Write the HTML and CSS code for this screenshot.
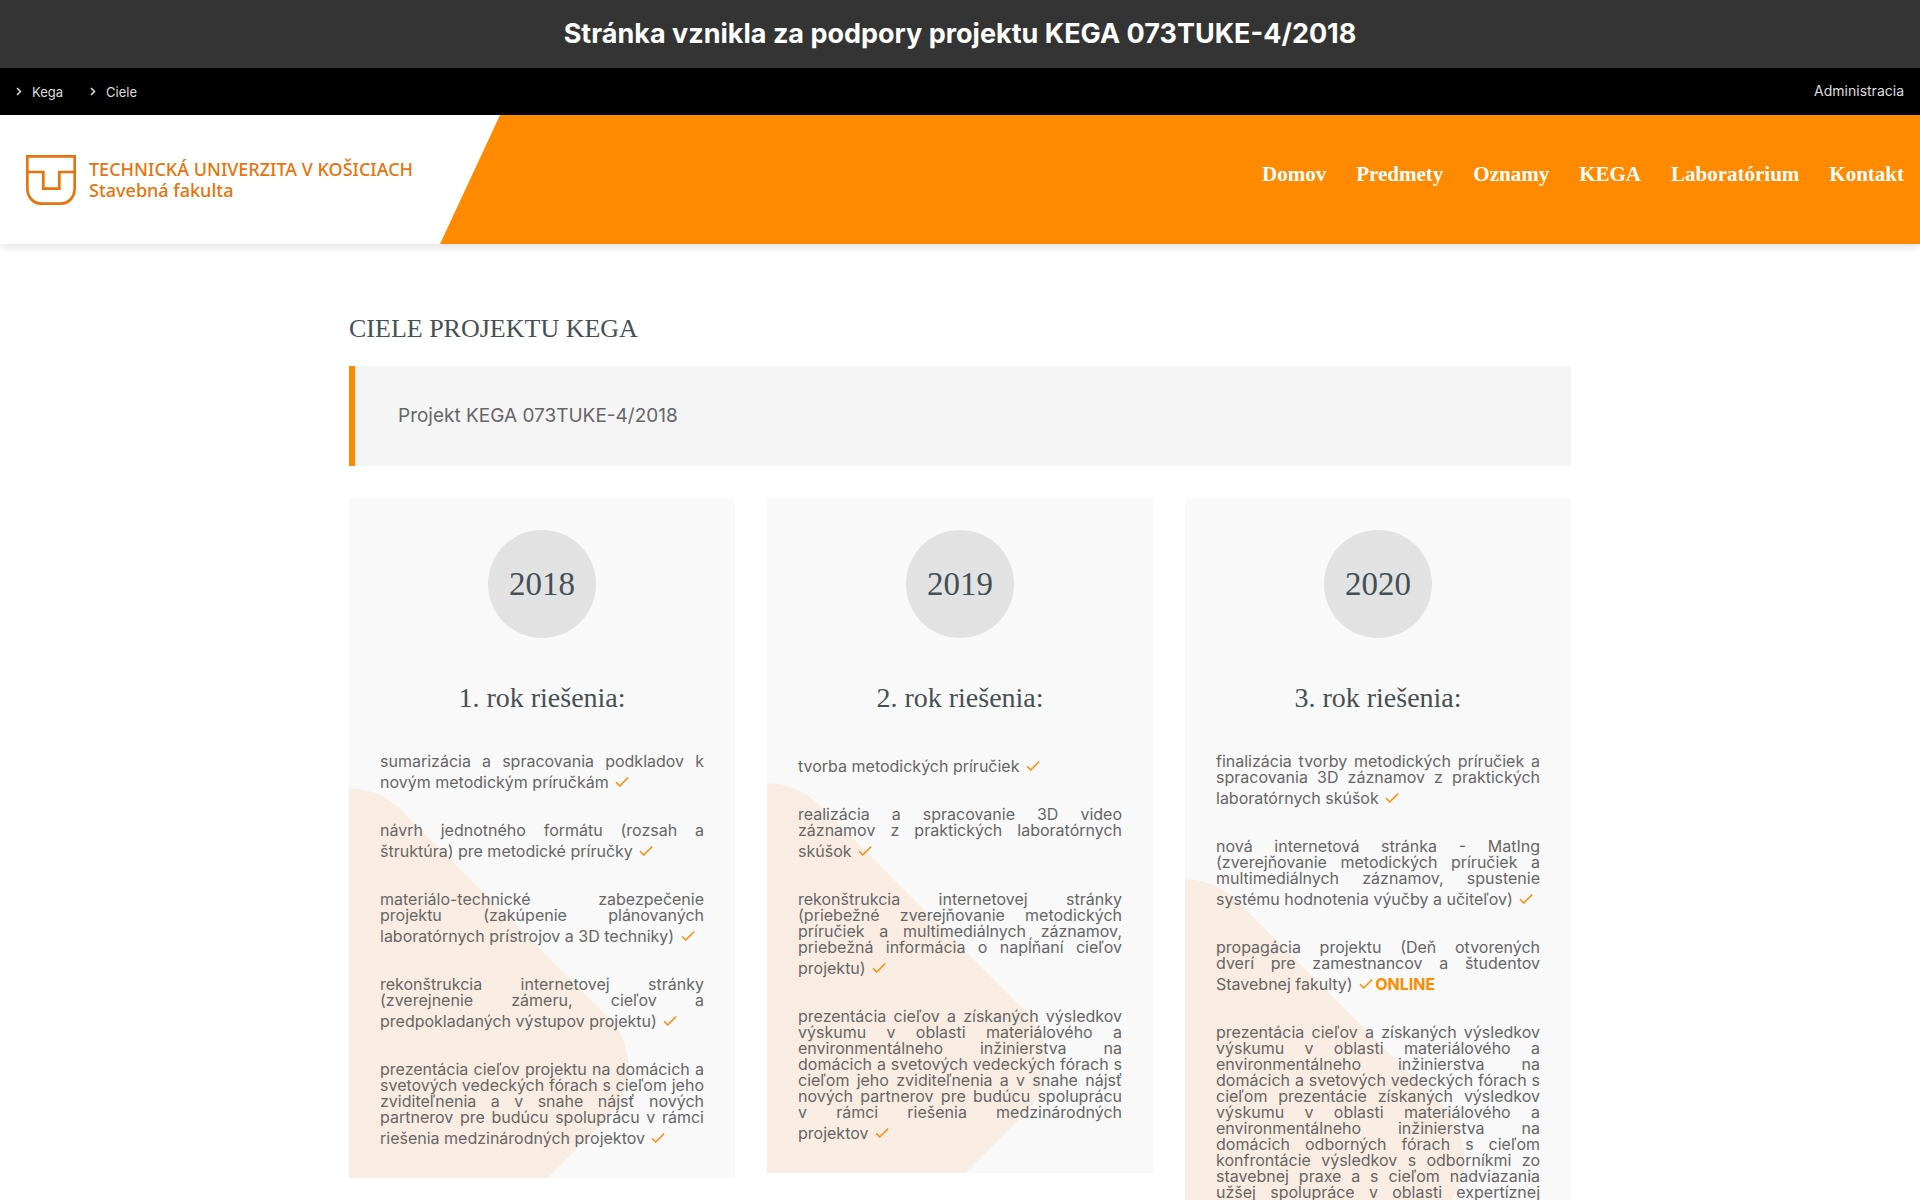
FILE: index.html
```html
<!DOCTYPE html>
<html lang="sk">
<head>
<meta charset="utf-8">
<meta name="viewport" content="width=device-width, initial-scale=1">
<title>Ciele projektu KEGA</title>
<link rel="stylesheet" href="styles.css">
</head>
<body>
<svg class="sprite" aria-hidden="true">
  <symbol id="check" viewBox="0 -5 24 28"><path d="M9 16.17 4.83 12l-1.42 1.41L9 19 21 7l-1.41-1.41z"/></symbol>
  <symbol id="chevron" viewBox="0 0 6 9"><path d="M1 1l3.5 3.5L1 8" fill="none" stroke="currentColor" stroke-width="1.5"/></symbol>
</svg>

<div class="banner">Stránka vznikla za podpory projektu KEGA 073TUKE-4/2018</div>

<div class="topbar">
  <nav class="crumbs" aria-label="Cesta">
    <a href="#"><svg class="chevron"><use href="#chevron"/></svg>Kega</a>
    <a href="#"><svg class="chevron"><use href="#chevron"/></svg>Ciele</a>
  </nav>
  <a class="admin" href="#">Administracia</a>
</div>

<header class="header">
  <a class="brand" href="#">
    <svg class="shield" viewBox="0 0 50 50" fill="none" stroke="currentColor" stroke-width="2.7" aria-hidden="true">
      <path d="M1.3 1.3H48.7V33C48.7 42 43 48.7 34 48.7H16C7 48.7 1.3 42 1.3 33Z"/>
      <path d="M1.3 17H17.3V33.6H33.3V17H48.7"/>
    </svg>
    <span class="brand-text">TECHNICKÁ UNIVERZITA V KOŠICIACH<br>Stavebná fakulta</span>
  </a>
  <nav class="menu" aria-label="Hlavné menu">
    <a href="#">Domov</a>
    <a href="#">Predmety</a>
    <a href="#">Oznamy</a>
    <a href="#">KEGA</a>
    <a href="#">Laboratórium</a>
    <a href="#">Kontakt</a>
  </nav>
</header>

<main class="page">
  <h1>CIELE PROJEKTU KEGA</h1>
  <p class="callout">Projekt KEGA 073TUKE-4/2018</p>

  <div class="years">
    <section class="card">
      <div class="year">2018</div>
      <h2>1. rok riešenia:</h2>
      <div class="goals">
        <p>sumarizácia a spracovania podkladov k novým metodickým príručkám <svg class="check"><use href="#check"/></svg></p>
        <p>návrh jednotného formátu (rozsah a štruktúra) pre metodické príručky <svg class="check"><use href="#check"/></svg></p>
        <p>materiálo-technické zabezpečenie projektu (zakúpenie plánovaných laboratórnych prístrojov a 3D techniky) <svg class="check"><use href="#check"/></svg></p>
        <p>rekonštrukcia internetovej stránky (zverejnenie zámeru, cieľov a predpokladaných výstupov projektu) <svg class="check"><use href="#check"/></svg></p>
        <p>prezentácia cieľov projektu na domácich a svetových vedeckých fórach s cieľom jeho zviditeľnenia a v snahe nájsť nových partnerov pre budúcu spoluprácu v rámci riešenia medzinárodných projektov <svg class="check"><use href="#check"/></svg></p>
      </div>
    </section>

    <section class="card">
      <div class="year">2019</div>
      <h2>2. rok riešenia:</h2>
      <div class="goals">
        <p>tvorba metodických príručiek <svg class="check"><use href="#check"/></svg></p>
        <p>realizácia a spracovanie 3D video záznamov z praktických laboratórnych skúšok <svg class="check"><use href="#check"/></svg></p>
        <p>rekonštrukcia internetovej stránky (priebežné zverejňovanie metodických príručiek a multimediálnych záznamov, priebežná informácia o napĺňaní cieľov projektu) <svg class="check"><use href="#check"/></svg></p>
        <p>prezentácia cieľov a získaných výsledkov výskumu v oblasti materiálového a environmentálneho inžinierstva na domácich a svetových vedeckých fórach s cieľom jeho zviditeľnenia a v snahe nájsť nových partnerov pre budúcu spoluprácu v rámci riešenia medzinárodných projektov <svg class="check"><use href="#check"/></svg></p>
      </div>
    </section>

    <section class="card">
      <div class="year">2020</div>
      <h2>3. rok riešenia:</h2>
      <div class="goals">
        <p>finalizácia tvorby metodických príručiek a spracovania 3D záznamov z praktických laboratórnych skúšok <svg class="check"><use href="#check"/></svg></p>
        <p>nová internetová stránka - MatIng (zverejňovanie metodických príručiek a multimediálnych záznamov, spustenie systému hodnotenia výučby a učiteľov) <svg class="check"><use href="#check"/></svg></p>
        <p>propagácia projektu (Deň otvorených dverí&nbsp;pre zamestnancov a študentov Stavebnej&nbsp;fakulty) <svg class="check"><use href="#check"/></svg><strong>ONLINE</strong></p>
        <p>prezentácia cieľov a získaných výsledkov výskumu v oblasti materiálového a environmentálneho inžinierstva na domácich a svetových vedeckých fórach s cieľom prezentácie získaných výsledkov výskumu v oblasti materiálového a environmentálneho inžinierstva na domácich odborných fórach s cieľom konfrontácie výsledkov s odborníkmi zo stavebnej praxe a s cieľom nadviazania užšej spolupráce v oblasti expertíznej činnosti a riešenia spoločných projektov <svg class="check"><use href="#check"/></svg></p>
      </div>
    </section>
  </div>
</main>
</body>
</html>
```
FILE: styles.css
```css
* { box-sizing: border-box; }

body {
  margin: 0;
  background: #fff;
  color: #666;
  font: 16px/16px Inter, "Open Sans", sans-serif;
}

a { color: inherit; text-decoration: none; }
h1, h2, p { margin: 0; }
.sprite { display: none; }

.banner {
  padding: 16px;
  background: #343434;
  color: #fff;
  font-size: 27px;
  line-height: 36px;
  font-weight: 700;
  text-align: center;
}

.topbar {
  display: flex;
  justify-content: space-between;
  align-items: center;
  padding: 12px 16px;
  background: #000;
  color: #ddd;
  font-size: 14px;
  line-height: 23px;
}
.crumbs { display: flex; gap: 27px; padding-top: 2px; font-size: 13px; line-height: 21px; }
.crumbs a { display: flex; align-items: center; gap: 10px; }
.chevron { width: 6px; height: 9px; margin-bottom: 3px; }
.admin { padding-bottom: 2px; line-height: 21px; }

.header {
  display: flex;
  justify-content: space-between;
  align-items: stretch;
  min-height: 129px;
  background: #ff8a00;
  box-shadow: 0 2px 10px rgba(0, 0, 0, .14);
}
.brand {
  display: flex;
  align-items: center;
  gap: 13px;
  width: 500px;
  padding-left: 26px;
  background: #fff;
  color: #e8730c;
  clip-path: polygon(0 0, 100% 0, 440px 100%, 0 100%);
}
.shield { width: 50px; height: 50px; }
.brand-text {
  font: 500 18px/21px "Noto Sans", sans-serif;
  white-space: nowrap;
}
.menu {
  display: flex;
  align-items: center;
  gap: 30px;
  padding: 0 16px 12px;
  color: #fff;
  font: 700 21px/24px "Liberation Serif", serif;
}

.page {
  max-width: 1222px;
  margin: 0 auto;
  padding: 69px 0 32px;
}
h1, h2, .year {
  color: #455055;
  font-family: "Liberation Serif", serif;
  font-weight: 400;
}
h1 {
  margin-bottom: 21px;
  font-size: 26px;
  line-height: 32px;
}
.callout {
  margin-bottom: 32px;
  padding: 38px 43px;
  border-left: 6px solid #ff8a00;
  background: #f5f5f5;
  font-size: 19px;
  line-height: 24px;
}

.years {
  display: grid;
  grid-template-columns: repeat(3, 1fr);
  align-items: start;
  gap: 32px;
}
.card {
  position: relative;
  z-index: 0;
  overflow: hidden;
  padding: 32px 31px;
  background: #f9f9f9;
}
.card::before {
  content: "";
  position: absolute;
  z-index: -1;
  left: -217px;
  bottom: -107px;
  width: 436px;
  height: 436px;
  border-radius: 72px;
  background: #f9ede3;
  transform: rotate(45deg);
}
.year {
  width: 108px;
  margin: 0 auto 44px;
  border-radius: 50%;
  background: #e2e2e2;
  font-size: 33px;
  line-height: 108px;
  text-align: center;
}
h2 {
  margin-bottom: 39px;
  font-size: 28px;
  line-height: 32px;
  text-align: center;
}
.goals {
  display: flex;
  flex-direction: column;
  gap: 32px;
  text-align: justify;
}
.check {
  width: 18px;
  height: 21px;
  vertical-align: -2px;
  fill: #ff8a00;
}
strong { color: #ff8a00; }
```
